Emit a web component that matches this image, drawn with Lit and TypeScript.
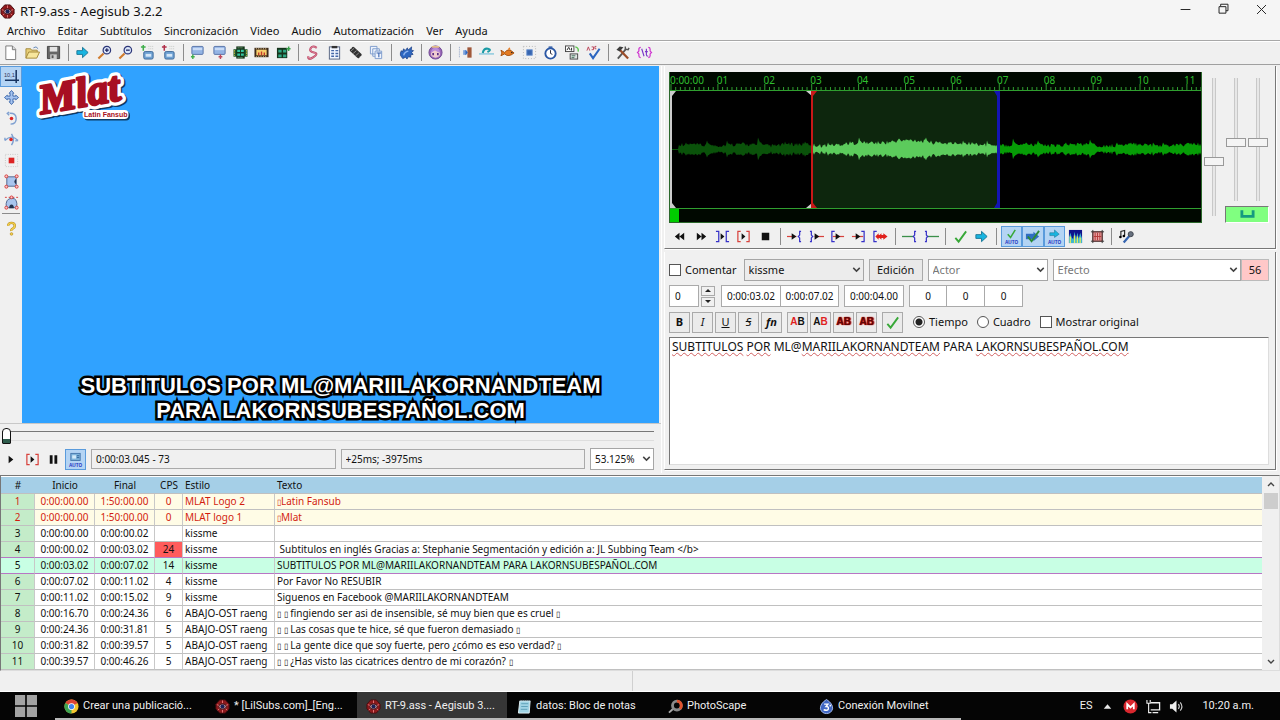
import { LitElement, html, svg, css, nothing, type SVGTemplateResult } from "lit";
import { customElement, property, state } from "lit/decorators.js";
import { classMap } from "lit/directives/class-map.js";

type Art = SVGTemplateResult;

const arrow = svg`<path d="M2 6h6V2.500l6 5.500-6 5.500V10H2z" fill="#18b4e0" stroke="#1d7896"/>`;
const check = svg`<path d="M2.500 9.500 6 13.500 14 2.500" fill="none" stroke="#38a838" stroke-width="2"/>`;
const playSmall = svg`<path d="M6 4.500v7l4-3.500z" fill="#111"/>`;
const autoText = svg`<text x="8" y="15.500" font-size="5" font-weight="700" font-family="Liberation Sans, sans-serif" text-anchor="middle" fill="#1c2fc0">AUTO</text>`;
const leftBr = (x: number, c: string) => svg`<path d="M${x + 3} 2.500H${x}v11h3" fill="none" stroke=${c} stroke-width="1.300"/>`;
const rightBr = (x: number, c: string) => svg`<path d="M${x - 3} 2.500H${x}v11h-3" fill="none" stroke=${c} stroke-width="1.300"/>`;
const leftCurl = (x: number, c: string) => svg`<path d="M${x + 3} 2.500h-1.500v4L${x} 8l1.500 1.500v4h1.500" fill="none" stroke=${c} stroke-width="1.300"/>`;
const rightCurl = (x: number, c: string) => svg`<path d="M${x - 3} 2.500h1.500v4L${x} 8l-1.500 1.500v4h-1.500" fill="none" stroke=${c} stroke-width="1.300"/>`;
const glass = (plus: boolean) => svg`<path d="M1.500 14.500 7 9" stroke="#d07a2c" stroke-width="2.200"/><circle cx="10.500" cy="5.500" r="4" fill="#dbe7fb" stroke="#2c3678" stroke-width="1.300"/><path d="M8.500 5.500h4${plus ? "M10.500 3.500v4" : ""}" stroke="#1b1f5c" stroke-width="1.300"/>`;
const tv = svg`<rect x="2" y="1.500" width="12" height="8.500" rx="1" fill="#93b4e4" stroke="#5672a8"/><path d="M3 3h10v2.500H3z" fill="#c9dbf6"/>`;
const jump = (c: string) => svg`<rect x="4" y="7" width="10" height="8" rx="1.500" fill="#6fa2d4" stroke="#3d6797"/><rect x="6" y="9.500" width="6" height="3" fill="#d3e6f8"/><path d="M1 2h5M3.500 0v6" stroke=${c} stroke-width="1.600"/><path d="M9 1.500h6M9 4h6" stroke="#c3c8c3" stroke-dasharray="1 1"/>`;

const ART: Record<string, Art> = {
  logo: svg`<path d="M5 1h6l4 4.500v5L11 15H5L1 10.500v-5z" fill="#8d1a1d" stroke="#4a0d10"/><path d="M8 1.500v3M8 11.500v3M2 6l2.500 1M14 6l-2.500 1M3 12l2-2M13 12l-2-2" stroke="#e9777a"/><ellipse cx="8" cy="8" rx="4" ry="2.800" fill="#c99aa4" stroke="#381013"/><circle cx="8" cy="8" r="2.200" fill="#1a2358"/>`,
  file: svg`<path d="M3 1h7l3.500 3.500V15.500H3z" fill="#fff" stroke="#777"/><path d="M10 1v4h3.500" fill="#ddd" stroke="#777"/>`,
  open: svg`<path d="M1 14V4h5l1 1.500h6V8" fill="#e8cf78" stroke="#a2873a"/><path d="M1 14 4 7.500h11.500L12.500 14z" fill="#f7e69c" stroke="#a2873a"/><path d="M9 3q3-2.500 5 1" fill="none" stroke="#5e83b5"/>`,
  save: svg`<path d="M1.500 1.500h13v13h-13z" fill="#666" stroke="#444"/><path d="M4 2h8v5H4z" fill="#e4e4e4"/><path d="M4.500 10h7v5h-7z" fill="#ccc"/><path d="M6 11h2v3H6z" fill="#555"/>`,
  arrow,
  zin: glass(true),
  zout: glass(false),
  jumpA: jump("#3fae4b"),
  jumpB: jump("#b0304a"),
  tvA: svg`${tv}<path d="M3 10v5M1 12.500h4" stroke="#3fae4b" stroke-width="1.500"/>`,
  tvB: svg`${tv}<path d="M9 10v5M7 12.500h4" stroke="#c04a5c" stroke-width="1.500"/>`,
  filmA: svg`<path d="M.5 4.500h15v8H.5z" fill="#1d5c2c"/><path d="M3.500 1.500h9v13h-9z" fill="#16341c"/><path d="M4.500 5h3v2.500h-3zM8.500 5h3v2.500h-3zM4.500 9h3v2.500h-3zM8.500 9h3v2.500h-3z" fill="#35c7a2"/><path d="M1.500 5.500v6M14.500 5.500v6" stroke="#e5c24a" stroke-dasharray="1.500 1"/><path d="M5 3h6M5 13.500h6" stroke="#8fd08f" stroke-dasharray="1 1"/>`,
  filmB: svg`<rect x=".5" y="3" width="15" height="10" fill="#3d2a1b"/><path d="M2.500 5h11v6h-11z" fill="#f7cf6c"/><path d="M2 4h12M2 12.500h12" stroke="#f4dca4" stroke-dasharray="1 1.500"/><path d="M5 11V8M8 11V7M11 11V8" stroke="#c23a2c" stroke-width="1.500"/>`,
  filmC: svg`<path d="M1 3h11v11H1z" fill="#16341c"/><path d="M2.500 5h3.500v3H2.500zM7.500 5H11v3H7.500zM2.500 10h3.500v3H2.500zM7.500 10H11v3H7.500z" fill="#2ea784"/><path d="M11 4h4.500M13.500 1.500v5" stroke="#38a14a" stroke-width="1.600"/>`,
  style: svg`<path d="M12.500 3Q8 0 6 3.500T9.500 8 9 13 3.500 12" fill="none" stroke="#b8405f" stroke-width="2.200"/><path d="M12.500 3Q8 0 6 3.500T9.500 8 9 13 3.500 12" fill="none" stroke="#f0a5b6" stroke-width=".7"/>`,
  props: svg`<rect x="2.500" y="2" width="11" height="13" fill="#f2f6ff" stroke="#53617f"/><path d="M5 1h6v2.500H5z" fill="#333"/><path d="M4.500 6h3M9 6h3M4.500 9h3M9 9h3M4.500 12h3M9 12h3" stroke="#4467a8" stroke-width="1.500"/>`,
  clip: svg`<path d="m3.500 5.500 7.500 7M5.500 3.500l7.500 7" stroke="#333" stroke-width="3.200" stroke-linecap="round"/><path d="m3 6.500 3.500-3M5.500 9l3.500-3M8 11.500l3.500-3" stroke="#aaa" stroke-width=".8"/>`,
  fonts: svg`<path d="M1.500 1.500h7v8h-7zM4 4h7v8H4z" fill="#eef3fd" stroke="#7d9ccc"/><path d="M6.500 6.500h7v8h-7z" fill="#eef3fd" stroke="#7d9ccc"/><path d="M8 8.500h5M10.500 8.500v4.500" stroke="#3d67b0" stroke-width="1.200"/>`,
  gear: svg`<path d="M1.500 11q-.500-3 1-5l1 1.500L5 4l1.500 2L9 3l.5 2.500 4-3.500-.5 3.500 2.500.5-2 2 1.500 2-2.500.5V13l-2.500-.5L8.500 15l-1.500-2-3 1.500z" fill="#2c66c0" stroke="#1b3f86" stroke-width=".8"/><path d="M5 11q1-4 5-4.500" fill="none" stroke="#8fb6f0" stroke-width="1.500"/>`,
  girl: svg`<circle cx="8" cy="8" r="7" fill="#9a68b8" stroke="#6e4690"/><ellipse cx="8" cy="9.500" rx="4.800" ry="4" fill="#f0cdd0"/><path d="M3 8q3-1 4-3 3 3 6 3-1-5-5-5T3 8" fill="#b98cdc"/><path d="M5.500 8.500v2.500M10.500 8.500v2.500" stroke="#5a2e86" stroke-width="1.800"/><path d="M4 2h8" stroke="#e7c28b" stroke-width="1.800"/>`,
  shift: svg`<path d="M10 2.500h4.500v11H10z" fill="#a0583a"/><path d="M5.500 5.500h3.500v5H5.500z" fill="#7aa2dd"/><path d="m8 5 2.500 3L8 11z" fill="#2c66c0"/><path d="M1.500 2v12" stroke="#8ca0c4" stroke-dasharray="1 1"/>`,
  wave: svg`<path d="M0 9.500h16" stroke="#87c8dd" stroke-width="1.500"/><path d="M4 8.500Q5 3 9.500 4T9 7.500" fill="none" stroke="#1a9aa4" stroke-width="2.200"/>`,
  fish: svg`<path d="M1 5.500 5 8Q9 2.500 15 8.500q-6 5-10 1l-4 2 1-3z" fill="#e47b22" stroke="#a4500e"/><path d="M8 5 10 2.500 11.500 5" fill="#e47b22"/><circle cx="12.500" cy="8" r=".8" fill="#222"/>`,
  select: svg`<path d="M5 5h6v6H5z" fill="#3665b0" stroke="#7c9fd4"/><path d="M1.500 1.500h13v13h-13z" fill="none" stroke="#b2b2b2" stroke-dasharray="1 2"/>`,
  clock: svg`<circle cx="8" cy="9" r="5.500" fill="#fff" stroke="#2a57a4" stroke-width="2"/><path d="M8 5.500V9l2 1" fill="none" stroke="#223"/><path d="M6 1.500h4v1.500H6z" fill="#2a57a4"/>`,
  translate: svg`<rect x=".5" y="1" width="9" height="6" fill="#fff" stroke="#444"/><path d="M2 5.500 4 2.500l1.500 3M7 3v3" fill="none" stroke="#222"/><rect x="5.500" y="9.500" width="8" height="5.500" fill="#dfe5e2" stroke="#444"/><path d="M7 11.500h4M7 13.500h3" stroke="#3a6b55"/><path d="M11 2q4 1 3 5" fill="none" stroke="#5cc64d" stroke-width="1.500"/>`,
  spell: svg`<path d="m4 9 3.500 5L14.500 4" fill="none" stroke="#2c66c0" stroke-width="2.200"/><path d="m1 6 1.500-4L4 6M6 2h2v3H6M11 1.500h-1.500V4H11" fill="none" stroke="#bb4358"/>`,
  tools: svg`<path d="M3 14.500 12 4" stroke="#555" stroke-width="2"/><path d="m5 5 9 9.500" stroke="#9c4d28" stroke-width="2.400"/><path d="M1.500 5 5 1.500l4 1L5 7z" fill="#3c3c3c"/><path d="M11 1.500v3l3 .5 1-2" fill="none" stroke="#555" stroke-width="1.500"/>`,
  assdraw: svg`<path d="M4 2.500q-2 0-2 2v2L.5 8 2 9.500v2q0 2 2 2M12 2.500q2 0 2 2v2L15.500 8 14 9.500v2q0 2-2 2" fill="none" stroke="#cf35cf" stroke-width="1.300"/><path d="m5 4 2.500 8M10 4v6.500q0 1.500 2 1.500M8.500 7h3" fill="none" stroke="#7a35c8" stroke-width="1.200"/>`,
  cross: svg`<text x="0" y="9" font-size="6" font-family="Liberation Sans, sans-serif" fill="#335">10,1</text><path d="M13 1v14M1 12h15" stroke="#17335f" stroke-width="1.600"/>`,
  move: svg`<path d="m8 .5 2.500 3H9.500v3h3V5.500l3 2.500-3 2.500v-1h-3v3h1L8 15.500l-2.500-3h1v-3h-3v1L.5 8l3-2.500v1h3v-3h-1z" fill="#a7c5f1" stroke="#3c67ab"/>`,
  rotZ: svg`<path d="M6 2.500q7-.500 7 5.500t-6 6M5.500 1 3.500 2.500l2 2" fill="none" stroke="#7e9fd0" stroke-width="1.500"/><circle cx="8" cy="8" r="1.900" fill="#dc2323"/>`,
  rotXY: svg`<path d="M1 9Q8 2 15 9M8 2q4 6 0 12M1 9V6M15 9l-3 .5" fill="none" stroke="#7e9fd0" stroke-width="1.500"/><circle cx="7.500" cy="8" r="1.900" fill="#dc2323"/>`,
  scale: svg`<path d="M1.500 1.500h13v13h-13z" fill="none" stroke="#c4c4c4" stroke-dasharray="1 1.500"/><path d="M5 5h6v6H5z" fill="#dc2323"/>`,
  clipR: svg`<path d="M3 3h10v10H3z" fill="#a9c5ee" stroke="#4d638c"/><path d="M13 5q-4 3 0 6z" fill="#22324e"/><g fill="#f7c9c9" stroke="#d63c3c"><circle cx="2.500" cy="2.500" r="1.600"/><circle cx="13.500" cy="2.500" r="1.600"/><circle cx="2.500" cy="13.500" r="1.600"/><circle cx="13.500" cy="13.500" r="1.600"/></g>`,
  clipV: svg`<path d="M2.500 13.500Q1 4 8 3.500t5.500 10z" fill="#a9c5ee" stroke="#4d638c"/><path d="M5.500 14q0-4 2.500-4t2.500 4z" fill="#22324e"/><path d="M1 2.500h14" stroke="#d63c3c" stroke-dasharray="2 2"/><g fill="#f7c9c9" stroke="#d63c3c"><circle cx="8" cy="2.500" r="1.500"/><circle cx="2.500" cy="13.500" r="1.600"/><circle cx="13.500" cy="13.500" r="1.600"/></g>`,
  help: svg`<path d="M4.500 5q0-3 3.500-3t3.500 3q0 2-2 3T8 10.500" fill="none" stroke="#b48a1c" stroke-width="2.600"/><path d="M4.500 5q0-3 3.500-3t3.500 3q0 2-2 3T8 10.500" fill="none" stroke="#f3d04e" stroke-width="1.500"/><circle cx="8" cy="13.800" r="1.400" fill="#f3d04e" stroke="#b48a1c" stroke-width=".7"/>`,
  prev: svg`<path d="M8 4v8L3 8zM13 4v8L8 8z" fill="#111"/>`,
  next: svg`<path d="M3 4v8l5-4zM8 4v8l5-4z" fill="#111"/>`,
  playSel: svg`${rightBr(4, "#3530c8")}${playSmall}${leftBr(12, "#3530c8")}`,
  playLine: svg`${leftBr(2, "#d8423c")}${playSmall}${rightBr(14, "#d8423c")}`,
  stop: svg`<path d="M4 4h8v8H4z" fill="#111"/>`,
  pBefore: svg`<path d="M0 8h10" stroke="#d8423c" stroke-width="1.300"/><path d="M5 4.500v7L10 8z" fill="#111"/>${leftCurl(12, "#3530c8")}`,
  pAfter: svg`<path d="M6 8h10" stroke="#d8423c" stroke-width="1.300"/><path d="M6 4.500v7L11 8z" fill="#111"/>${rightCurl(4, "#3530c8")}`,
  pFirst: svg`<path d="M3 8h12" stroke="#d8423c" stroke-width="1.300"/><path d="M6 4.500v7L11 8z" fill="#111"/>${leftBr(2, "#3530c8")}`,
  pLast: svg`<path d="M1 8h12" stroke="#d8423c" stroke-width="1.300"/><path d="M5 4.500v7L10 8z" fill="#111"/>${rightBr(14, "#3530c8")}`,
  pEnd: svg`${leftBr(1, "#3530c8")}<path d="M2.500 8 6 4.500v2h1L9 4.500v2h2V4.500L15.500 8 11 11.500v-2H9v2L7 9.500H6v2z" fill="#e0201c"/>`,
  leadIn: svg`<path d="M0 8h12" stroke="#3b8f4a" stroke-width="1.400"/>${leftCurl(12, "#3530c8")}`,
  leadOut: svg`<path d="M4 8h12" stroke="#3b8f4a" stroke-width="1.400"/>${rightCurl(4, "#3530c8")}`,
  check,
  autoCheck: svg`<path d="M4 5.500 7 9l5-8" fill="none" stroke="#38a838" stroke-width="1.600"/>${autoText}`,
  nextCheck: svg`<path d="M1 5h8V3l6 5-6 5v-2H1z" fill="#2f6ec2"/><path d="M3 8l4 5 8-11" fill="none" stroke="#2c8a38" stroke-width="2"/>`,
  autoArrow: svg`<path d="M3 4h5V1l5 4.500L8 9V7H3z" fill="#18b4e0" stroke="#1d7896" stroke-width=".6"/>${autoText}`,
  spectrum: svg`<path d="M1 1h14v14H1z" fill="#10148c"/><path d="M1 15V9l1.500-5L4 9l1.500 2L7 3l1.500 8L10 4l1.500 6L13 4l2 6v5z" fill="#3fb6d0"/><path d="M2.500 15V8M7 15V7M10 15V8M13 15V9" stroke="#e4ec5c" stroke-width="1.300"/>`,
  medusa: svg`<path d="M3 3h10v10H3z" fill="#e8a0a0" stroke="#b43a3a"/><path d="M3 1v14M13 1v14M1 3h14M1 13h14" stroke="#333"/><path d="M5.500 4v8M8 4v8M10.500 4v8M4 8h8" stroke="#b43a3a"/>`,
  karaoke: svg`<path d="M2 8V2.500l4-1V7" fill="none" stroke="#222" stroke-width="1.200"/><circle cx="1.500" cy="8.500" r="1.400"/><circle cx="5.200" cy="7.500" r="1.400"/><path d="m5 14.500 6-7" stroke="#3665b0" stroke-width="2.400"/><circle cx="12.500" cy="5.500" r="2.700" fill="#68717f" stroke="#3c424c"/>`,
  vplay: svg`<path d="M6 4v8l5-4z" fill="#111"/>`,
  pause: svg`<path d="M4 3.500h3v9H4zM9 3.500h3v9H9z" fill="#111"/>`,
  vauto: svg`<rect x="3" y="1.500" width="10" height="7.500" fill="#7fb4dc" stroke="#4878ad"/><path d="M4.500 3.500h4v3.500h-4z" fill="#d4ebfa"/><path d="M9.500 4h2.500M9.500 6h2.500" stroke="#2d5f94"/>${autoText}`,
  snap: svg`<path d="M2 3.500V10h12V3.500" fill="none" stroke="#159a80" stroke-width="3"/>`,
  win: svg`<path d="M0 0h7.400v7.400H0zM8.600 0H16v7.400H8.600zM0 8.600h7.400V16H0zM8.600 8.600H16V16H8.600z" fill="#a3a3a3"/>`,
  chrome: svg`<circle cx="8" cy="8" r="7.500" fill="#f2c52f"/><path d="M8 8 1.500 4.200A7.500 7.500 0 0 1 14.500 4.200z" fill="#dc4437"/><path d="M8 8 1.500 4.200A7.500 7.500 0 0 0 8 15.500z" fill="#3fa553"/><circle cx="8" cy="8" r="3.600" fill="#fff"/><circle cx="8" cy="8" r="2.800" fill="#4284ee"/>`,
  note: svg`<path d="M3 2h11l-1 13H1.500z" fill="#9fd3e4" stroke="#e4f3f8"/><path d="M4.500 5h7.500M4.500 8h7M4 11h7" stroke="#5d9fb8"/><path d="M3.500 1.500H14" stroke="#4c636c" stroke-dasharray="1 1"/>`,
  scape: svg`<circle cx="9.500" cy="7" r="4.700" fill="none" stroke="#8a8a8a" stroke-width="3"/><path d="M9.500 2.300a4.700 4.700 0 0 1 3.300 8" fill="none" stroke="#e0532e" stroke-width="3"/><path d="m1 14.500 4-3.500" stroke="#aaa" stroke-width="2"/>`,
  movil: svg`<path d="M8 .5Q15 5 14.500 10.500 13 15.500 8 15.500T1.500 10.500Q1 5 8 .5" fill="#3f66c4" stroke="#a9c0f0"/><path d="M5.500 5.500h4L7.500 8q3 0 2.500 2.500T5 11.500M12 6v2" fill="none" stroke="#fff" stroke-width="1.500"/>`,
  up: svg`<path d="m4 10.500 4-5 4 5z" fill="#e8e8e8"/>`,
  mega: svg`<circle cx="8" cy="8" r="7.500" fill="#d9272e"/><path d="M4.500 11V5.500L8 9l3.500-3.500V11" fill="none" stroke="#fff" stroke-width="1.900"/>`,
  net: svg`<path d="M5 4h9.500v7.500H5M7 14.500h6" fill="none" stroke="#eee" stroke-width="1.400"/><path d="M1 1v3.500h3.500V1M2.800 4.500v10h3" fill="none" stroke="#eee" stroke-width="1.200"/>`,
  vol: svg`<path d="M1 5.500h2.500L8 1.500v13L3.500 10.500H1z" fill="#eee"/><path d="M10 5.500q2 2.500 0 5M12 3.500q3.500 4.500 0 9" fill="none" stroke="#ccc" stroke-width="1.200"/>`,
  min: svg`<path d="M2 8h12" stroke="#222" stroke-width="1.200"/>`,
  max: svg`<path d="M4.500 4V1.500h9v8H11M2.500 4.500h8.500v8H2.500z" fill="none" stroke="#222" stroke-width="1.200"/>`,
  close: svg`<path d="m2.500 2.500 11 11M13.500 2.500l-11 11" stroke="#222" stroke-width="1.200"/>`,
  su: svg`<path d="m4 10 4-4 4 4" fill="none" stroke="#444" stroke-width="1.800"/>`,
  sd: svg`<path d="m4 6 4 4 4-4" fill="none" stroke="#444" stroke-width="1.800"/>`,
};

const MENUS = ["Archivo", "Editar", "Subtítulos", "Sincronización", "Video", "Audio", "Automatización", "Ver", "Ayuda"];

const MAIN_TOOLS = [
  ["file", "open", "save"],
  ["arrow", "zin", "zout", "jumpA", "jumpB"],
  ["tvA", "tvB", "filmA", "filmB", "filmC"],
  ["style", "props", "clip", "fonts"],
  ["gear"],
  ["girl"],
  ["shift", "wave", "fish", "select", "clock", "translate", "spell"],
  ["tools", "assdraw"],
];

const AUDIO_TOOLS = [
  ["prev", "next", "playSel", "playLine", "stop"],
  ["pBefore", "pAfter", "pFirst", "pLast", "pEnd"],
  ["leadIn", "leadOut"],
  ["check", "arrow"],
  ["autoCheck", "nextCheck", "autoArrow", "spectrum", "medusa"],
  ["karaoke"],
];
const PRESSED = new Set(["autoCheck", "nextCheck", "autoArrow", "cross", "vauto"]);

const VISUAL_TOOLS = [["cross", "move", "rotZ", "rotXY", "scale", "clipR", "clipV"], ["help"]];

interface Line { start: string; end: string; cps: string; style: string; text: string; kind?: string }
const LINES: Line[] = [
  { start: "0:00:00.00", end: "1:50:00.00", cps: "0", style: "MLAT Logo 2", text: "▯Latin Fansub", kind: "comment" },
  { start: "0:00:00.00", end: "1:50:00.00", cps: "0", style: "MLAT logo 1", text: "▯Mlat", kind: "comment" },
  { start: "0:00:00.00", end: "0:00:00.02", cps: "", style: "kissme", text: "" },
  { start: "0:00:00.02", end: "0:00:03.02", cps: "24", style: "kissme", text: " Subtitulos en inglés Gracias a: Stephanie Segmentación y edición a: JL Subbing Team </b>", kind: "fast" },
  { start: "0:00:03.02", end: "0:00:07.02", cps: "14", style: "kissme", text: "SUBTITULOS POR ML@MARIILAKORNANDTEAM PARA LAKORNSUBESPAÑOL.COM", kind: "active" },
  { start: "0:00:07.02", end: "0:00:11.02", cps: "4", style: "kissme", text: "Por Favor No RESUBIR" },
  { start: "0:00:11.02", end: "0:00:15.02", cps: "9", style: "kissme", text: "Siguenos en Facebook @MARIILAKORNANDTEAM" },
  { start: "0:00:16.70", end: "0:00:24.36", cps: "6", style: "ABAJO-OST raeng", text: "▯ ▯ fingiendo ser asi de insensible, sé muy bien que es cruel ▯" },
  { start: "0:00:24.36", end: "0:00:31.81", cps: "5", style: "ABAJO-OST raeng", text: "▯ ▯ Las cosas que te hice, sé que fueron demasiado ▯" },
  { start: "0:00:31.82", end: "0:00:39.57", cps: "5", style: "ABAJO-OST raeng", text: "▯ ▯ La gente dice que soy fuerte, pero ¿cómo es eso verdad? ▯" },
  { start: "0:00:39.57", end: "0:00:46.26", cps: "5", style: "ABAJO-OST raeng", text: "▯ ▯ ¿Has visto las cicatrices dentro de mi corazón? ▯" },
];

const TASKS: [string, string][] = [
  ["chrome", "Crear una publicació..."],
  ["logo", "* [LilSubs.com]_[Eng..."],
  ["logo", "RT-9.ass - Aegisub 3...."],
  ["note", "datos: Bloc de notas"],
  ["scape", "PhotoScape"],
  ["movil", "Conexión Movilnet"],
];

// Peaks of the waveform: position and half height.
const PEAKS: [number, number][] = [
  [37, 9], [57, 9], [88, 12], [115, 8], [135, 8], [158, 7], [189, 12], [202, 8], [222, 9], [229, 11], [245, 10],
  [256, 12], [270, 8], [293, 9], [317, 9], [343, 11], [356, 7], [368, 9], [396, 7], [420, 10], [447, 7],
  [470, 6], [483, 7], [493, 7], [508, 5], [524, 7],
];

function halfHeight(x: number): number {
  if (x < 9) return 0.5;
  const noise = Math.abs(Math.sin(x * 12.9898) * 43758.5453) % 1;
  const swell = 5 * Math.exp(-(((x - 238) / 50) ** 2));
  const drift = 1 + Math.sin(x / 9) * 0.8;
  let h = 1.5 + drift + swell * 0.8 + noise * 4;
  for (const [p, amp] of PEAKS) {
    const d = x - p;
    if (d > 0 && d < 8) h = Math.max(h, (amp * (10 - d)) / 11 - noise * 2);
    if (d === 0) h = amp;
  }
  return h;
}

function wavePath(from: number, to: number): string {
  let top = "";
  let bottom = "";
  for (let x = from; x <= to; x++) {
    const h = halfHeight(x);
    top += `L${x} ${(59 - h).toFixed(1)}`;
    bottom = `L${x} ${(59 + h * 0.9).toFixed(1)}` + bottom;
  }
  return `M${from} 59${top}${bottom}Z`;
}

const TICKS = Array.from({ length: 114 }, (_, i) => {
  const x = 1 + i * 4.69;
  return `M${x.toFixed(2)} 18V${i % 10 === 0 ? 12 : 15}`;
}).join("");

@customElement("ui-icon")
export class UiIcon extends LitElement {
  @property() name = "";
  static styles = css`
    :host { display: block; width: 15px; height: 15px; flex: none; }
    svg { display: block; width: 100%; height: 100%; overflow: visible; }
  `;
  render() {
    return html`<svg viewBox="0 0 16 16" aria-hidden="true">${ART[this.name] ?? nothing}</svg>`;
  }
}

@customElement("tool-strip")
export class ToolStrip extends LitElement {
  @property({ attribute: false }) groups: string[][] = [];
  @property({ type: Boolean, reflect: true }) vertical = false;
  static styles = css`
    :host { display: flex; align-items: center; }
    :host([vertical]) { flex-direction: column; align-items: stretch; }
    button {
      flex: 1 1 0; min-width: 0; height: 21px; padding: 0; margin: 0; border: 1px solid transparent;
      background: none; display: flex; align-items: center; justify-content: center;
    }
    :host([vertical]) button { flex: none; }
    .on { background: #b4d4f4; border-color: #5a9bdc; }
    .sep { width: 8px; display: flex; justify-content: center; flex: none; }
    .sep::before { content: ""; width: 1px; height: 17px; background: #8c8c8c; }
    :host([vertical]) .sep { width: auto; height: 5px; padding: 0 2px; }
    :host([vertical]) .sep::before { width: 100%; height: 1px; }
  `;
  render() {
    return this.groups.map((g, i) => html`
      ${i ? html`<span class="sep"></span>` : nothing}
      ${g.map((n) => html`<button class=${classMap({ on: PRESSED.has(n) })} aria-label=${n}><ui-icon name=${n}></ui-icon></button>`)}
    `);
  }
}

@customElement("app-root")
export class AppRoot extends LitElement {
  @state() private mode = "time";

  static styles = css`
    :host {
      display: flex; flex-direction: column; min-height: 100vh; background: #f0f0f0; color: #111;
      font: 11px/16px "Noto Sans", "Open Sans", sans-serif; overflow: hidden;
    }
    * { box-sizing: border-box; }
    button, input, select, textarea { font: inherit; color: inherit; margin: 0; border-radius: 0; }
    .title { display: flex; align-items: center; height: 22px; background: #f5f5f5; gap: 5px; font-size: 13px; }
    .title h1 { font: inherit; margin: 0; flex: 1; }
    .wins { display: flex; align-self: flex-start; }
    .wbtn { border: 0; background: none; padding: 0; width: 38px; height: 18px; display: flex; justify-content: center; align-items: center; }
    .wbtn ui-icon { width: 13px; height: 13px; }
    .menu { display: flex; gap: 12px; height: 19px; padding: 0 7px; background: #f5f5f5; border-bottom: 1px solid #a8a8a8; }
    .menu button { border: 0; background: none; padding: 0; line-height: 18px; }
    .bar { height: 24px; border-top: 1px solid #fff; border-bottom: 1px solid #a0a0a0; }
    .bar tool-strip { max-width: 655px; }
    .main { display: grid; grid-template-columns: 661fr 619fr; padding-top: 1px; }
    .left { display: flex; flex-direction: column; min-width: 0; }
    .stage { display: flex; border-bottom: 1px solid #c8c8c8; padding-right: 2px; }
    .stage tool-strip { width: 22px; flex: none; }
    .video { flex: 1; aspect-ratio: 637 / 357; background: #30a2ff; display: flex; flex-direction: column; justify-content: space-between; }
    .mark { width: 100px; height: 56px; margin: 2px 0 0 12px; display: block; overflow: visible; }
    .subs {
      font: bold 22px/25px "Liberation Sans", Arial, sans-serif; color: #fff; text-align: center; margin: 0;
      -webkit-text-stroke: 5px #000; paint-order: stroke fill; stroke-linejoin: round;
    }
    .seek { display: block; appearance: none; background: none; height: 22px; width: calc(100% - 9px); margin: 1px 0 0 2px; }
    .seek::-webkit-slider-runnable-track { height: 16px; background: linear-gradient(#777 0 1px, transparent 1px 9px, #ddd 9px 10px, transparent 10px); background-position: 0 3px; background-repeat: no-repeat; }
    .seek::-webkit-slider-thumb { appearance: none; width: 9px; height: 16px; background: linear-gradient(#fff 0 10px, #2e5c4c 10px); border: 1px solid #111; border-radius: 4px 4px 1px 1px; }
    .transport { display: flex; gap: 5px; align-items: center; padding: 1px 7px 3px 0; }
    .transport tool-strip { width: 86px; flex: none; }
    .transport input { flex: 1 1 0; min-width: 0; height: 20px; border: 1px solid #aaa; background: #f0f0f0; padding: 0 4px; font-size: 10px; }
    .zoom { width: 64px; }
    .pick { position: relative; display: block; height: 22px; }
    .pick select { appearance: none; width: 100%; height: 100%; border: 1px solid #a6a6a6; background: #fff; padding: 0 4px; }
    .zoom select { font-size: 10px; }
    .pick ui-icon { position: absolute; right: 1px; top: 4px; width: 13px; height: 13px; pointer-events: none; }
    .pick .grey { background: #ececec; }
    .pick .hint { color: #777; }
    .right { display: flex; flex-direction: column; gap: 3px; padding: 0 4px 3px 2px; min-width: 0; border-left: 1px solid #fff; }
    .panel { border-right: 1px solid #777; border-bottom: 1px solid #777; box-shadow: 1px 1px #fff; padding: 6px 5px 0 4px; border-left: 1px solid #fff; }
    .audio { display: flex; gap: 1px; }
    .display { flex: 1; min-width: 0; background: #000; border: 1px solid #2b682b; border-top: 0; }
    .ruler { height: 19px; position: relative; overflow: hidden; display: flex; color: #2fbe2f; border-bottom: 1px solid #2f9e2f; font-size: 10px; background: #000800; }
    .ruler span { flex: 0 0 8.8%; white-space: nowrap; }
    .ruler svg { position: absolute; left: 0; top: 0; width: 100%; height: 18px; }
    .wave { display: block; width: 100%; height: 117px; }
    .scroll { height: 14px; border-top: 1px solid #2f9e2f; background: #000800; }
    .scroll i { display: block; width: 9px; height: 100%; background: #00cc00; }
    .sliders { display: grid; grid-template-columns: 22px 44px; width: 67px; flex: none; }
    .vol { display: grid; grid-template-rows: 1fr 17px; row-gap: 4px; }
    .pair { display: flex; min-height: 0; }
    .v { appearance: none; writing-mode: vertical-lr; background: none; width: 22px; height: 150px; padding: 6px 0; }
    .pair .v { height: 129px; padding-bottom: 0; }
    .v::-webkit-slider-runnable-track { width: 20px; background: linear-gradient(90deg, transparent 8px, #c8c8c8 8px 9px, #e7e7e7 9px 11px, #c8c8c8 11px 12px, transparent 12px); }
    .v::-webkit-slider-thumb { appearance: none; width: 20px; height: 9px; background: #f4f4f4; border: 1px solid #999; }
    .snap { background: #80ff80; border: 1px solid #777; border-right-color: #fff; border-bottom-color: #fff; padding: 0; display: flex; align-items: center; justify-content: center; }
    .panel tool-strip { max-width: 468px; padding-top: 3px; padding-bottom: 1px; }
    .edit { flex: 1; display: flex; flex-direction: column; gap: 4px; padding: 7px 6px 4px 4px; }
    .row { display: flex; align-items: center; height: 22px; gap: 5px; }
    .chk, .rad { display: flex; align-items: center; gap: 4px; white-space: nowrap; }
    .chk input { appearance: none; width: 12px; height: 12px; border: 1px solid #555; background: #fff; }
    .rad input { appearance: none; width: 12px; height: 12px; border: 1px solid #555; background: #fff; border-radius: 50%; }
    .rad input:checked { background: radial-gradient(#222 0 3px, #fff 4px); }
    .style { width: 120px; margin-left: 2px; }
    .actor { width: 120px; }
    .effect { flex: 1; margin-right: -5px; }
    .btn { border: 1px solid #aaa; background: #e9e9e9; padding: 0; height: 22px; width: 54px; }
    .count { width: 28px; height: 22px; background: #ffc8c8; border: 1px solid #bbb; text-align: center; line-height: 20px; }
    .box { height: 22px; border: 1px solid #aaa; background: #fff; padding: 0; text-align: center; min-width: 0; font-size: 10px; }
    .layer { width: 30px; text-align: left; padding-left: 5px; }
    .spin { display: flex; flex-direction: column; gap: 1px; width: 14px; margin: 0 1px 0 -3px; }
    .spin button { height: 10px; width: 14px; padding: 0; border: 1px solid #aaa; background: #f0f0f0; display: flex; justify-content: center; align-items: center; }
    .spin button::before { content: ""; border: 3px solid transparent; border-top: 0; border-bottom-color: #222; }
    .spin .down::before { transform: rotate(180deg); }
    .joined { display: flex; }
    .time { width: 60px; }
    .joined .time + .time { width: 58px; border-left: 0; }
    .margin { width: 38px; }
    .joined .margin + .margin { border-left: 0; }
    .fmt { display: flex; gap: 2px; }
    .fmt button { width: 21px; height: 21px; border: 1px solid #aaa; background: #ebebeb; padding: 0; display: flex; align-items: center; justify-content: center; line-height: 16px; }
    .b { font-weight: 700; }
    .i { font-style: italic; }
    .u { text-decoration: underline; }
    .s { text-decoration: line-through; font-style: italic; }
    .fmt .ab { font: bold 10px/16px "Liberation Sans", Arial, sans-serif; }
    .red { color: #e01f1f; }
    .shade { color: #5c0808; text-shadow: 0 0 1px #e00, 1px 0 1px #a00; }
    .choices { display: flex; gap: 9px; margin-left: 5px; }
    .writer { position: relative; flex: 1; min-height: 127px; display: flex; font-size: 12px; }
    textarea { flex: 1; resize: none; border: 1px solid #777; border-right-color: #ddd; border-bottom-color: #ddd; background: #fff; padding: 1px 2px; outline: 0; }
    .spell { position: absolute; inset: 0; padding: 2px 3px; color: transparent; pointer-events: none; }
    .spell u { text-decoration: underline wavy #d06060 1px; text-underline-offset: 1px; text-decoration-skip-ink: none; }
    .list { display: flex; border: 1px solid #777; border-right-color: #ddd; border-bottom-color: #ddd; background: #fff; margin-top: 2px; }
    table { flex: 1; min-width: 0; border-collapse: separate; border-spacing: 0; table-layout: fixed; margin-top: 1px; font-size: 10px; }
    th { font-weight: 400; background: #a5cfe7; padding: 0; height: 17px; line-height: 16px; text-align: center; border-bottom: 1px solid #c0c0c0; }
    td { padding: 0 0 0 2px; height: 16px; line-height: 15px; border-right: 1px solid #c8c8c8; border-bottom: 1px solid #c0c0c0; white-space: pre; overflow: hidden; }
    td:nth-child(-n + 4) { text-align: center; padding: 0; }
    td:first-child { background: #c4ecc9; }
    td:last-child { border-right: 0; }
    th:nth-child(n + 5) { text-align: left; padding-left: 2px; }
    .c1 { width: 34px; } .c2 { width: 60px; } .c4 { width: 28px; } .c5 { width: 92px; }
    .comment td { color: #d21c10; background: #fffce6; }
    .comment td:first-child { background: #c4ecc9; }
    .fast td:nth-child(4) { background: #ff5c5c; }
    .fast td { border-bottom-color: #b876c4; }
    .active td { background: #c8ffe4; border-bottom-color: #b876c4; }
    .tofu { font-size: 8px; line-height: 1; }
    .vbar { width: 17px; flex: none; display: flex; flex-direction: column; align-items: center; background: #f0f0f0; }
    .vbar i { width: 14px; height: 16px; background: #cdcdcd; }
    .vbar ui-icon { width: 12px; margin: 1px 0; }
    .vbar .last { margin-top: auto; }
    .status { flex: 1; min-height: 20px; display: grid; grid-template-columns: 632fr 648fr; border-bottom: 1px solid #fff; }
    .status div + div { border-left: 1px solid #d0d0d0; }
    .tasks { height: 28px; background: #050505; color: #f0f0f0; display: flex; align-items: stretch; font: 11px/16px Roboto, "Noto Sans", sans-serif; }
    .start { width: 55px; border: 0; background: none; padding: 0 0 1px 15px; display: flex; align-items: center; }
    .start ui-icon { width: 22px; height: 22px; }
    .task { flex: 0 1 151px; min-width: 0; border: 0; background: none; border-bottom: 2px solid #b9b9b9; box-shadow: inset -1px 0 #050505; padding: 2px 4px 0 9px; display: flex; align-items: center; gap: 4px; white-space: nowrap; overflow: hidden; }
    .current { background: #363636; }
    .tray { margin-left: auto; display: flex; align-items: center; gap: 8px; padding-right: 26px; }
    .clock { margin-left: 10px; }
  `;

  private pick(cls: string, label: string, value: string, tone = "") {
    return html`<span class="pick ${cls}"><select class=${tone} aria-label=${label}><option>${value}</option></select><ui-icon name="sd"></ui-icon></span>`;
  }

  private lineText(text: string) {
    return text.split(/(▯)/).map((part) => (part === "▯" ? html`<span class="tofu">▯</span>` : part));
  }

  private renderVideo() {
    return html`
      <section class="left">
        <div class="stage">
          <tool-strip vertical .groups=${VISUAL_TOOLS}></tool-strip>
          <div class="video">
            <svg class="mark" viewBox="0 0 100 56" role="img" aria-label="Mlat Latin Fansub">
              <g font-family="Liberation Serif, serif" font-weight="700" font-style="italic" font-size="42" stroke-linejoin="round" transform="rotate(-10 46 30)">
                <text x="5" y="39" stroke="#0c3c66" stroke-width="9" fill="#0c3c66" transform="translate(1.500 1.500)">Mlat</text>
                <text x="5" y="39" stroke="#fff" stroke-width="9" fill="#fff">Mlat</text>
                <text x="5" y="39" fill="#a80f22" stroke="#a80f22" stroke-width="2.500">Mlat</text>
              </g>
              <rect x="50" y="43.500" width="46" height="9" rx="4" fill="#0c3c66"/>
              <rect x="48.500" y="42" width="46" height="9" rx="4" fill="#fff"/>
              <text x="50" y="49" font-family="Liberation Sans, sans-serif" font-weight="700" font-size="7" fill="#a80f22">Latin Fansub</text>
            </svg>
            <p class="subs">SUBTITULOS POR ML@MARIILAKORNANDTEAM<br>PARA LAKORNSUBESPAÑOL.COM</p>
          </div>
        </div>
        <input class="seek" type="range" min="0" max="1000" value="0" aria-label="Posición">
        <div class="transport">
          <tool-strip .groups=${[["vplay", "playLine", "pause", "vauto"]]}></tool-strip>
          <input readonly aria-label="Tiempo actual" value="0:00:03.045 - 73">
          <input readonly aria-label="Desfase" value="+25ms; -3975ms">
          ${this.pick("zoom", "Zoom", "53.125%")}
        </div>
      </section>`;
  }

  private renderAudio() {
    const labels = ["0:00:00", ...Array.from({ length: 11 }, (_, i) => String(i + 1).padStart(2, "0"))];
    return html`
      <section class="panel">
        <div class="audio">
          <div class="display">
            <div class="ruler">
              ${labels.map((l) => html`<span>${l}</span>`)}
              <svg viewBox="0 0 531 18" preserveAspectRatio="none"><path d=${TICKS} stroke="#2f9e2f"/></svg>
            </div>
            <svg class="wave" viewBox="0 0 531 118" preserveAspectRatio="none" aria-hidden="true">
              <path d="M142 0h186v118H142z" fill="#0d260d"/>
              <path d=${wavePath(2, 142)} fill="#0a520a"/>
              <path d=${wavePath(142, 327)} fill="#5ccb5c"/>
              <path d=${wavePath(330, 531)} fill="#069c06"/>
              <path d="M0 0h6L2 5v108l4 5H0zM136 0h6v5zM136 118h6v-5z" fill="#ccc"/>
              <path d="M141 0h6l-4 5v108l4 5h-6z" fill="#c81818"/>
              <path d="M330 0h-6l3 5v108l-3 5h6z" fill="#1414b4"/>
            </svg>
            <div class="scroll"><i></i></div>
          </div>
          <div class="sliders">
            <input class="v" type="range" value="61" aria-label="Zoom horizontal">
            <div class="vol">
              <div class="pair">
                <input class="v" type="range" value="53" aria-label="Zoom vertical">
                <input class="v" type="range" value="53" aria-label="Volumen">
              </div>
              <button class="snap" aria-label="Vincular"><ui-icon name="snap"></ui-icon></button>
            </div>
          </div>
        </div>
        <tool-strip .groups=${AUDIO_TOOLS}></tool-strip>
      </section>`;
  }

  private renderEdit() {
    return html`
      <section class="panel edit">
        <div class="row">
          <label class="chk"><input type="checkbox">Comentar</label>
          ${this.pick("style", "Estilo", "kissme", "grey")}
          <button class="btn">Edición</button>
          ${this.pick("actor", "Actor", "Actor", "hint")}
          ${this.pick("effect", "Efecto", "Efecto", "hint")}
          <output class="count">56</output>
        </div>
        <div class="row">
          <input class="box layer" aria-label="Capa" value="0">
          <span class="spin"><button aria-label="Subir"></button><button class="down" aria-label="Bajar"></button></span>
          <span class="joined"><input class="box time" aria-label="Inicio" value="0:00:03.02"><input class="box time" aria-label="Final" value="0:00:07.02"></span>
          <input class="box time" aria-label="Duración" value="0:00:04.00">
          <span class="joined">${["Izquierdo", "Derecho", "Vertical"].map((m) => html`<input class="box margin" aria-label=${m} value="0">`)}</span>
        </div>
        <div class="row">
          <span class="fmt"><button class="b">B</button><button class="i">I</button><button class="u">U</button><button class="s">S</button><button class="i b">fn</button></span>
          <span class="fmt"><button class="ab"><span class="red">A</span>B</button><button class="ab">A<span class="red">B</span></button><button class="ab shade">AB</button><button class="ab shade">AB</button></span>
          <span class="fmt"><button aria-label="Aceptar"><ui-icon name="check"></ui-icon></button></span>
          <span class="choices">
            <label class="rad"><input type="radio" name="mode" .checked=${this.mode === "time"} @change=${() => (this.mode = "time")}>Tiempo</label>
            <label class="rad"><input type="radio" name="mode" .checked=${this.mode === "frame"} @change=${() => (this.mode = "frame")}>Cuadro</label>
            <label class="chk"><input type="checkbox">Mostrar original</label>
          </span>
        </div>
        <div class="writer">
          <textarea aria-label="Texto" spellcheck="false" .value=${LINES[4].text}></textarea>
          <div class="spell" aria-hidden="true"><u>SUBTITULOS</u> <u>POR</u> ML@<u>MARIILAKORNANDTEAM</u> PARA <u>LAKORNSUBESPAÑOL.COM</u></div>
        </div>
      </section>`;
  }

  private renderLines() {
    return html`
      <section class="list">
        <table>
          <colgroup><col class="c1"><col class="c2"><col class="c2"><col class="c4"><col class="c5"><col></colgroup>
          <thead><tr>${["#", "Inicio", "Final", "CPS", "Estilo", "Texto"].map((h) => html`<th scope="col">${h}</th>`)}</tr></thead>
          <tbody>${LINES.map((l, i) => html`<tr class=${l.kind ?? ""}><td>${i + 1}</td><td>${l.start}</td><td>${l.end}</td><td>${l.cps}</td><td>${l.style}</td><td>${this.lineText(l.text)}</td></tr>`)}</tbody>
        </table>
        <div class="vbar"><ui-icon name="su"></ui-icon><i></i><ui-icon class="last" name="sd"></ui-icon></div>
      </section>`;
  }

  render() {
    return html`
      <header class="title">
        <ui-icon name="logo"></ui-icon>
        <h1>RT-9.ass - Aegisub 3.2.2</h1>
        <div class="wins">${["min", "max", "close"].map((n) => html`<button class="wbtn" aria-label=${n}><ui-icon name=${n}></ui-icon></button>`)}</div>
      </header>
      <nav class="menu">${MENUS.map((m) => html`<button>${m}</button>`)}</nav>
      <div class="bar"><tool-strip .groups=${MAIN_TOOLS}></tool-strip></div>
      <main class="main">
        ${this.renderVideo()}
        <div class="right">${this.renderAudio()}${this.renderEdit()}</div>
      </main>
      ${this.renderLines()}
      <div class="status"><div></div><div></div></div>
      <footer class="tasks">
        <button class="start" aria-label="Inicio"><ui-icon name="win"></ui-icon></button>
        ${TASKS.map(([icon, label], i) => html`<button class=${classMap({ task: true, current: i === 2 })}><ui-icon name=${icon}></ui-icon>${label}</button>`)}
        <div class="tray"><span>ES</span><ui-icon name="up"></ui-icon><ui-icon name="mega"></ui-icon><ui-icon name="net"></ui-icon><ui-icon name="vol"></ui-icon><span class="clock">10:20 a.m.</span></div>
      </footer>`;
  }
}
